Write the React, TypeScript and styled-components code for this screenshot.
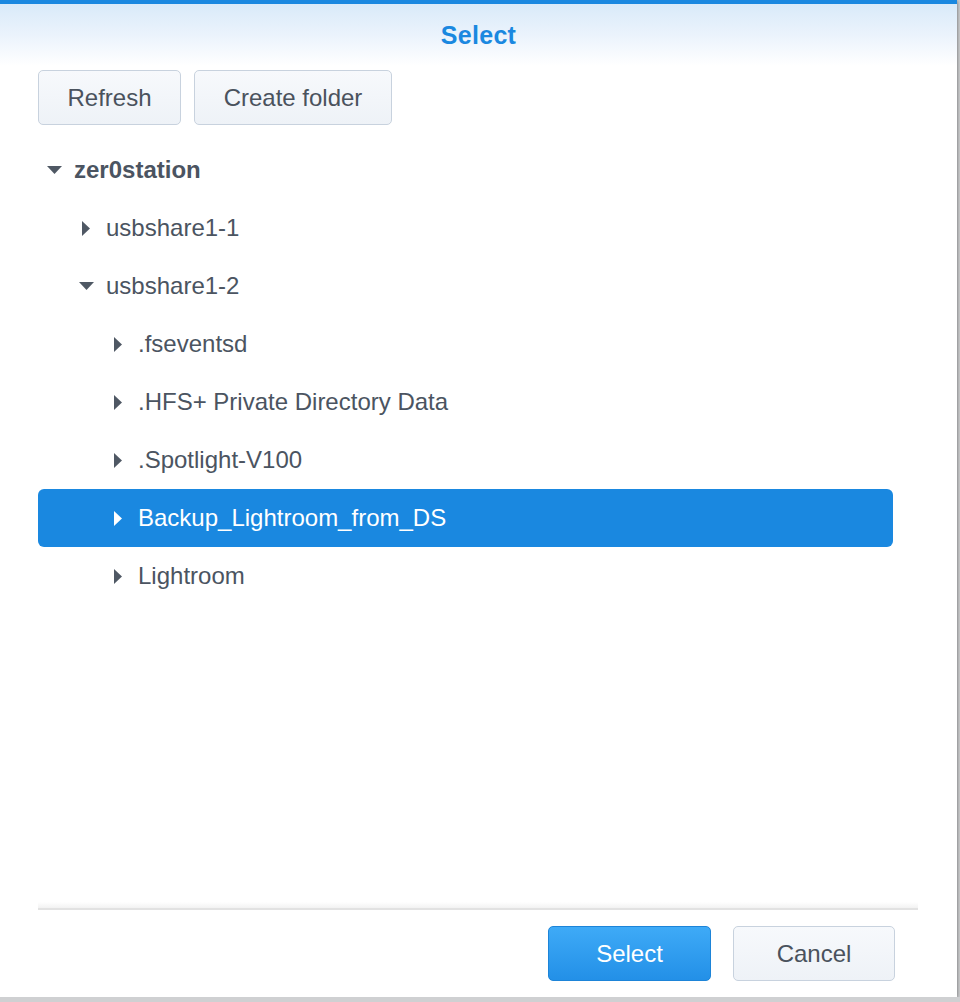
import React from "react";
import styled, { createGlobalStyle } from "styled-components";

const Global = createGlobalStyle`
  html, body { margin: 0; padding: 0; }
  body {
    background: #cfd0d2;
    font-family: "Liberation Sans", Arial, Helvetica, sans-serif;
    overflow: hidden;
  }
`;

const Dialog = styled.div`
  width: 957px;
  height: 997px;
  box-sizing: border-box;
  background: #ffffff;
  border-top: 4px solid #1a88e0;
  display: flex;
  flex-direction: column;
  box-shadow: 0 1px 4px rgba(0, 0, 0, 0.55);
`;

const Header = styled.div`
  height: 62px;
  display: flex;
  align-items: center;
  justify-content: center;
  background: linear-gradient(#d9eaf9 0%, #ebf3fc 50%, #ffffff 100%);
`;

const Title = styled.div`
  font-size: 25px;
  font-weight: 700;
  color: #1a88e0;
  letter-spacing: 0.3px;
`;

const Toolbar = styled.div`
  display: flex;
  gap: 13px;
  padding: 4px 38px 0;
`;

const Button = styled.button<{ $primary?: boolean; $w: number }>`
  height: 55px;
  width: ${(p) => p.$w}px;
  box-sizing: border-box;
  padding: 0;
  border-radius: 5px;
  font-family: "Liberation Sans", Arial, sans-serif;
  font-size: 24px;
  cursor: pointer;
  border: 1.5px solid ${(p) => (p.$primary ? "#1d84d8" : "#c8d2de")};
  color: ${(p) => (p.$primary ? "#ffffff" : "#4a525d")};
  background: ${(p) =>
    p.$primary
      ? "linear-gradient(#3eaaf7, #2390e7)"
      : "linear-gradient(#f7f9fc, #eef2f7)"};
`;

const Tree = styled.div`
  margin: 16px 0 0 38px;
  width: 855px;
  display: flex;
  flex-direction: column;
`;

const Row = styled.div<{ $level: number; $selected?: boolean }>`
  height: 58px;
  display: flex;
  align-items: center;
  padding-left: ${(p) => p.$level * 32}px;
  border-radius: 6px;
  background: ${(p) => (p.$selected ? "#1a88e0" : "transparent")};
  color: ${(p) => (p.$selected ? "#ffffff" : "#4b5461")};
`;

const Toggle = styled.span`
  width: 32px;
  height: 58px;
  margin-right: 4px;
  display: flex;
  align-items: center;
  justify-content: center;
`;

const Label = styled.span<{ $bold?: boolean }>`
  font-size: 24px;
  font-weight: ${(p) => (p.$bold ? 700 : 400)};
  white-space: nowrap;
`;

const Spacer = styled.div`
  flex: 1;
`;

const Separator = styled.div`
  margin: 0 39px 0 38px;
  height: 2px;
  background: #e2e2e2;
  position: relative;
  &::before {
    content: "";
    position: absolute;
    left: 0;
    right: 0;
    top: -6px;
    height: 6px;
    background: linear-gradient(rgba(240, 240, 240, 0), #f2f2f2);
  }
`;

const Footer = styled.div`
  display: flex;
  justify-content: flex-end;
  gap: 22px;
  padding: 16px 62px 16px 0;
`;

const Arrow = ({ open, color }: { open: boolean; color: string }) =>
  open ? (
    <svg width="15" height="8" viewBox="0 0 15 8">
      <polygon points="0,0 15,0 7.5,8" fill={color} />
    </svg>
  ) : (
    <svg width="8" height="15" viewBox="0 0 8 15">
      <polygon points="0,0 8,7.5 0,15" fill={color} />
    </svg>
  );

type Item = { label: string; level: number; open: boolean; bold?: boolean; selected?: boolean };

const items: Item[] = [
  { label: "zer0station", level: 0, open: true, bold: true },
  { label: "usbshare1-1", level: 1, open: false },
  { label: "usbshare1-2", level: 1, open: true },
  { label: ".fseventsd", level: 2, open: false },
  { label: ".HFS+ Private Directory Data", level: 2, open: false },
  { label: ".Spotlight-V100", level: 2, open: false },
  { label: "Backup_Lightroom_from_DS", level: 2, open: false, selected: true },
  { label: "Lightroom", level: 2, open: false },
];

export default function App() {
  return (
    <>
      <Global />
      <Dialog>
        <Header>
          <Title>Select</Title>
        </Header>
        <Toolbar>
          <Button $w={143}>Refresh</Button>
          <Button $w={198}>Create folder</Button>
        </Toolbar>
        <Tree>
          {items.map((it) => (
            <Row key={it.label} $level={it.level} $selected={it.selected}>
              <Toggle>
                <Arrow open={it.open} color={it.selected ? "#ffffff" : "#4f5864"} />
              </Toggle>
              <Label $bold={it.bold}>{it.label}</Label>
            </Row>
          ))}
        </Tree>
        <Spacer />
        <Separator />
        <Footer>
          <Button $primary $w={163}>Select</Button>
          <Button $w={162}>Cancel</Button>
        </Footer>
      </Dialog>
    </>
  );
}
